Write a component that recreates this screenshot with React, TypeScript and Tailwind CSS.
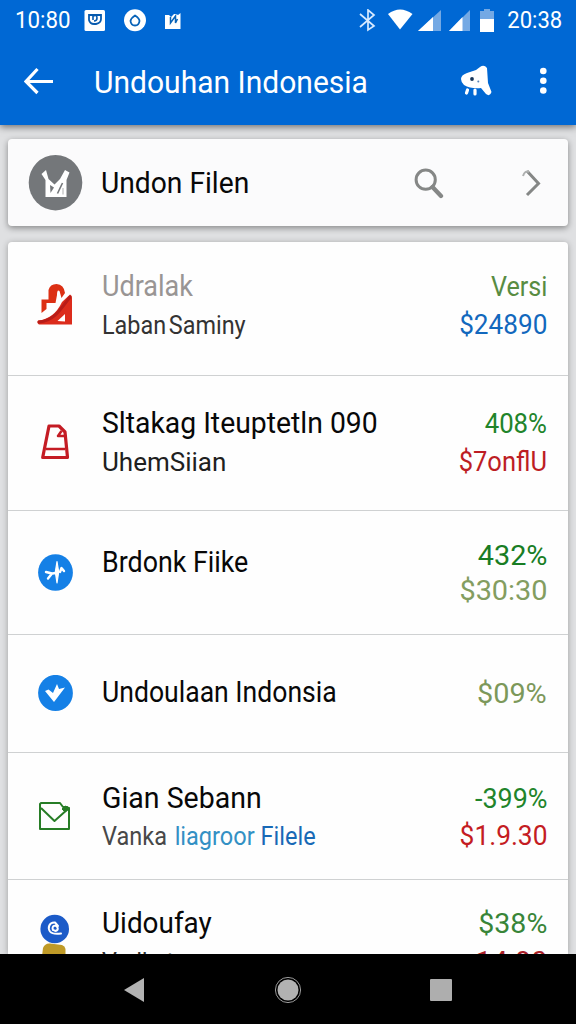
import type { ReactNode } from 'react';

type Line = { text: ReactNode; cls: string };
type Row = { height: string; icon: ReactNode; iconPad: string; leftPad: string; rightPad: string; left: Line[]; right: Line[] };

const TITLE = 'origin-left text-[30px] leading-[40px]';
const SUB = 'origin-left text-[26px] leading-[36px]';
const VALUE = 'origin-right text-[28px] leading-[36px]';

const LockIcon = () => (
  <svg className="h-[44px] w-[38px]" viewBox="36 282 38 44" fill="none">
    <path d="M41.500 313V299.500H48.500V290Q50 284 56.500 284Q64 284.500 65 293L61.500 298L59.500 291Q57 289 57 295L55.500 303H46.500V309Z" fill="#dc3014" />
    <path d="M50.500 303.500H56L54 309L47.500 314.500V307Z" fill="#fff" />
    <path d="M38 320.500Q54 319 62 302L70 294.500Q72 295 72 298V324.500H39Q36.500 323 38 320.500Z" fill="#dc2c1c" />
    <path d="M39 322C54 321 61 309 70 297" stroke="#b81c18" strokeWidth="3" strokeLinecap="round" />
    <path d="M57.500 321 65 314V321.500Z" fill="#fff" />
  </svg>
);

const PageIcon = () => (
  <svg className="h-[38px] w-[30px]" viewBox="41 423 30 38" fill="none" stroke="#c41c24" strokeWidth="3.2" strokeLinejoin="round">
    <path d="M50 426H60L66 432 68.500 457.500H43.700L50 426Z" />
    <path d="M47 449H66" strokeWidth="2.5" />
    <path d="M65.500 436H59L62.500 431" strokeWidth="2.5" />
  </svg>
);

const BlueStarIcon = () => (
  <svg className="h-[37px] w-[35px]" viewBox="38 554 35 37">
    <ellipse cx="55.5" cy="572.5" rx="17.4" ry="18.3" fill="#1580e6" />
    <path d="M57 561.500 58.700 572 57 583 55.300 572Z" fill="#fff" stroke="#fff" strokeWidth="1.200" strokeLinejoin="round" />
    <path d="M46 572 52 573.500 48 578.500M52 573.500 56 573M60 572 61.500 568 64 571" fill="none" stroke="#fff" strokeWidth="2.400" strokeLinecap="round" strokeLinejoin="round" />
  </svg>
);

const BlueCheckIcon = () => (
  <svg className="h-[37px] w-[35px]" viewBox="38 675 35 37">
    <ellipse cx="55.5" cy="693" rx="17.4" ry="18.1" fill="#1580e6" />
    <path d="M45 691 48.500 689.500 53 693 57 684 59 689 65 687.500 54 702Z" fill="#fff" />
  </svg>
);

const MailIcon = () => (
  <svg className="h-[30px] w-[34px]" viewBox="39 801 34 30" fill="none" stroke="#277d26" strokeWidth="2" strokeLinejoin="round">
    <path d="M42 803H61L64 807H68L70 809V829H41V804Z" />
    <path d="M42 808 55.5 821 70 808" />
    <path d="M63 809 66 806 71 808 66 812Z" fill="#277d26" strokeWidth="1" />
  </svg>
);

const AccountIcon = () => (
  <svg className="h-[42px] w-[30px]" viewBox="41 914 30 42" fill="none">
    <path d="M43 956 44 948Q46 943 51 943.500L63 945Q66 946 66.500 949V956Z" fill="#bf9a27" />
    <circle cx="55.7" cy="929" r="14.3" fill="#1c5bc8" />
    <path d="M54 930C52 926 57 924 58.500 927.500C59.500 930 57 932 54.500 930M56 922.500C50 922 48.500 928 51 931.500C53 934 58 934 62 933.500M56 922.500 59 926" stroke="#fff" strokeWidth="2" strokeLinecap="round" />
  </svg>
);

const rows: Row[] = [
  {
    height: 'h-[134px] border-b', icon: <LockIcon />, iconPad: 'pt-[40px]', leftPad: 'pt-[24px]', rightPad: 'pt-[27px]',
    left: [
      { text: 'Udralak', cls: `${TITLE} scale-x-[0.9] text-[#999594]` },
      { text: <>Laban<span className="ml-[3px]">Saminy</span></>, cls: `${SUB} mt-[1px] scale-x-[0.9] text-[#333333]` },
    ],
    right: [
      { text: 'Versi', cls: `${VALUE} scale-x-[0.9] text-[#588c42]` },
      { text: '$24890', cls: `${VALUE} mt-[2px] scale-x-[0.935] text-[#1268bd]` },
    ],
  },
  {
    height: 'h-[135px] border-b', icon: <PageIcon />, iconPad: 'pt-[47px]', leftPad: 'pt-[27px]', rightPad: 'pt-[30px]',
    left: [
      { text: 'Sltakag Iteuptetln 090', cls: `${TITLE} scale-x-[0.945] text-[#080808]` },
      { text: 'UhemSiian', cls: `${SUB} mt-[1px] text-[#202020]` },
    ],
    right: [
      { text: '408%', cls: `${VALUE} scale-x-[0.92] text-[#21842a]` },
      { text: '$7onflU', cls: `${VALUE} mt-[2px] scale-x-[0.91] text-[#bd1d24]` },
    ],
  },
  {
    height: 'h-[124px] border-b', icon: <BlueStarIcon />, iconPad: 'pt-[43px]', leftPad: 'pt-[31px]', rightPad: 'pt-[27px]',
    left: [{ text: 'Brdonk Fiike', cls: `${TITLE} scale-x-[0.893] text-[#080808]` }],
    right: [
      { text: '432%', cls: `${VALUE} scale-x-[1.03] text-[#187d24]` },
      { text: '$30:30', cls: `${VALUE} -mt-[1px] scale-x-[1.03] text-[#839d60]` },
    ],
  },
  {
    height: 'h-[118px] border-b', icon: <BlueCheckIcon />, iconPad: 'pt-[40px]', leftPad: 'pt-[37px]', rightPad: 'pt-[41px]',
    left: [{ text: 'Undoulaan Indonsia', cls: `${TITLE} scale-x-[0.886] text-[#080808]` }],
    right: [{ text: '$09%', cls: `${VALUE} scale-x-[1.03] text-[#7c985a]` }],
  },
  {
    height: 'h-[127px] border-b', icon: <MailIcon />, iconPad: 'pt-[48px]', leftPad: 'pt-[25px]', rightPad: 'pt-[28px]',
    left: [
      { text: 'Gian Sebann', cls: `${TITLE} scale-x-[0.95] text-[#080808]` },
      {
        text: <>Vanka <span className="ml-[2px] text-[#3390c4]">liagroor</span> <span className="text-[#1869b6]">Filele</span></>,
        cls: `${SUB} scale-x-[0.905] text-[#484848]`,
      },
    ],
    right: [
      { text: '-399%', cls: `${VALUE} scale-x-[0.96] text-[#21842a]` },
      { text: '$1.9.30', cls: `${VALUE} mt-[1px] scale-x-[0.94] text-[#c41c22]` },
    ],
  },
  {
    height: 'h-[74px]', icon: <AccountIcon />, iconPad: 'pt-[34px]', leftPad: 'pt-[23px]', rightPad: 'pt-[26px]',
    left: [
      { text: 'Uidoufay', cls: `${TITLE} scale-x-[0.93] text-[#080808]` },
      { text: 'Vedkat', cls: `${SUB} mt-[1px] scale-x-[0.9] text-[#303030]` },
    ],
    right: [
      { text: '$38%', cls: `${VALUE} scale-x-[1.02] text-[#388538]` },
      { text: '14.90', cls: `${VALUE} mt-[2px] scale-x-[1.02] text-[#a92028]` },
    ],
  },
];

function Lines({ lines }: { lines: Line[] }) {
  return <>{lines.map((l, i) => <div key={i} className={`whitespace-nowrap ${l.cls}`}>{l.text}</div>)}</>;
}

function StatusBar() {
  return (
    <div className="flex h-[40px] items-center justify-between pt-[1px] pr-[14px] pl-[15px] text-[23px] leading-[40px]">
      <div className="flex items-center">
        <span className="w-[69px] origin-left scale-x-[0.97]">10:80</span>
        <svg className="h-[24px] w-[100px]" viewBox="84 8 100 24" fill="none">
          <rect x="84.5" y="9" width="20.5" height="21" rx="1.5" fill="#fff" />
          <path d="M89 14V19Q90 23 94 23H96Q101 22 101 18V14Z" stroke="#075aae" strokeWidth="1.8" />
          <path d="M93 15V19M93 15Q97 13 97 17Q97 20 94 20" stroke="#075aae" strokeWidth="1.6" />
          <circle cx="135" cy="19.3" r="11" fill="#fff" />
          <path d="M135 14.500Q139.500 17.500 139.500 20Q139 24.500 135 24.500Q131 24.500 130.500 20Q131 17 135 14.500Z" stroke="#0863b8" strokeWidth="1.8" />
          <path d="M165 14H169L171 16 174 13H176L178 14 180.500 12V28H165Z" fill="#fff" />
          <path d="M170.500 16V22L175.500 15V22L177.500 18" stroke="#0863b8" strokeWidth="1.5" />
        </svg>
      </div>
      <div className="flex items-center">
        <svg className="mr-[10px] h-[24px] w-[138px]" viewBox="359 8 138 24" fill="none">
          <path d="M362 13 376 25 370 29V9L376 14 362 26" stroke="#d7eaff" strokeWidth="1.7" />
          <path d="M390 13Q402 4 414.500 13L402 28.500Z" fill="#fff" />
          <path d="M443 9V30H420Z" fill="#74a9e4" />
          <path d="M435 16V30H420Z" fill="#fff" />
          <path d="M472 9V30H451Z" fill="#74a9e4" />
          <path d="M464.500 16V30H451Z" fill="#fff" />
          <path d="M482 10H486V8H492V10H496V18H482Z" fill="#74a9e4" />
          <path d="M482 18H496V31H482Z" fill="#fff" />
        </svg>
        <span className="origin-right scale-x-[0.96]">20:38</span>
      </div>
    </div>
  );
}

export default function App() {
  return (
    <div className="flex h-[1024px] w-[576px] flex-col overflow-hidden bg-[#dfe0e2] font-['Roboto',sans-serif]">
      <header className="z-10 h-[125px] shrink-0 bg-[#0068d4] text-white shadow-[0_2px_7px_rgba(0,0,0,0.5)]">
        <StatusBar />
        <div className="flex h-[82px] items-center pl-[24px]">
          <svg className="h-[28px] w-[30px]" viewBox="24 67 30 28" fill="none" stroke="#fff" strokeWidth="3.2">
            <path d="M53 81.500H27M37.500 69 26 81.500 37.500 93" />
          </svg>
          <h1 className="mt-[2px] ml-[40px] w-[366px] origin-left scale-x-[0.938] text-[32px] leading-[40px] font-normal whitespace-nowrap">Undouhan Indonesia</h1>
          <svg className="h-[32px] w-[34px]" viewBox="460 66 34 32">
            <path d="M461 80Q461 76 467 74L476 71 480 68Q484 65 487 69L488 84 491.500 93Q490 98 486 95L481 89Q471 90 464 86Q461 83 461 80Z" fill="#fff" />
            <path d="M467.500 91 466.500 94M475 91V95" stroke="#fff" strokeWidth="3.2" strokeLinecap="round" />
            <circle cx="472" cy="80" r="1.9" fill="#17365a" />
            <circle cx="478.300" cy="82.500" r="1" fill="#5482b8" />
          </svg>
          <svg className="ml-[44px] h-[28px] w-[10px]" viewBox="538 67 10 28" fill="#fff">
            <circle cx="543.300" cy="71" r="3.300" /><circle cx="543.300" cy="80.700" r="3.300" /><circle cx="543.300" cy="90.500" r="3.300" />
          </svg>
        </div>
      </header>

      <main className="flex min-h-0 flex-1 flex-col overflow-hidden px-[8px] pt-[14px]">
        <section className="flex h-[87px] shrink-0 items-center rounded-[4px] bg-[#fbfbfc] pl-[20px] shadow-[0_2px_6px_rgba(0,0,0,0.4)]">
          <svg className="h-[56px] w-[55px]" viewBox="28 155 55 56" fill="none">
            <ellipse cx="55.500" cy="182.700" rx="26.800" ry="27.700" fill="#74777a" />
            <path d="M41.500 174 46 170 48.500 179 54.500 184.500 60 179 65 170 69.500 172.500 66.500 180V197H45.500V180Z" fill="#fff" />
            <path d="M50 185 54 187.500 50.500 193Z" fill="#74777a" />
            <path d="M62.500 183 57.500 193.500" stroke="#74777a" strokeWidth="1.600" />
            <path d="M63 188V194.500" stroke="#c6c7c8" strokeWidth="1.400" />
          </svg>
          <span className="ml-[18px] w-[312px] origin-left scale-x-[0.94] text-[30px] leading-[40px] whitespace-nowrap text-[#080808]">Undon Filen</span>
          <svg className="h-[32px] w-[32px]" viewBox="413 166 32 32" fill="none" stroke="#858786">
            <circle cx="425.700" cy="178.700" r="9.600" strokeWidth="3" />
            <path d="M432.500 186 441 195" strokeWidth="4.300" strokeLinecap="round" />
          </svg>
          <svg className="ml-[75px] h-[30px] w-[22px]" viewBox="520 167 22 30" fill="none" stroke="#858786" strokeWidth="3">
            <path d="M527 170 538.500 182.500 527 194" />
            <path d="M529 171Q525 169 523 175" stroke="#aeb0b0" strokeWidth="2" />
          </svg>
        </section>

        <section className="mt-[16px] shrink-0 rounded-t-[4px] bg-[#fefefe] shadow-[0_1px_6px_rgba(0,0,0,0.3)]">
          {rows.map((r, i) => (
            <div key={i} className={`flex border-[#cfd1d2] pr-[21px] ${r.height}`}>
              <div className={`flex w-[94px] shrink-0 items-start justify-center ${r.iconPad}`}><div>{r.icon}</div></div>
              <div className={`min-w-0 flex-1 ${r.leftPad}`}><Lines lines={r.left} /></div>
              <div className={`shrink-0 text-right ${r.rightPad}`}><Lines lines={r.right} /></div>
            </div>
          ))}
        </section>
      </main>

      <nav className="z-10 flex h-[70px] shrink-0 items-center justify-between bg-black pt-[1px] pr-[124px] pl-[123px]">
        <svg className="h-[26px] w-[22px]" viewBox="0 0 22 26"><path d="M1 13 21 1V25Z" fill="#b2b2b2" /></svg>
        <svg className="h-[28px] w-[28px]" viewBox="0 0 28 28"><circle cx="14" cy="14" r="12.600" fill="none" stroke="#999" /><circle cx="14" cy="14" r="10.500" fill="#b2b2b2" /></svg>
        <div className="h-[22px] w-[22px] rounded-[1px] bg-[#aeaeae]" />
      </nav>
    </div>
  );
}
